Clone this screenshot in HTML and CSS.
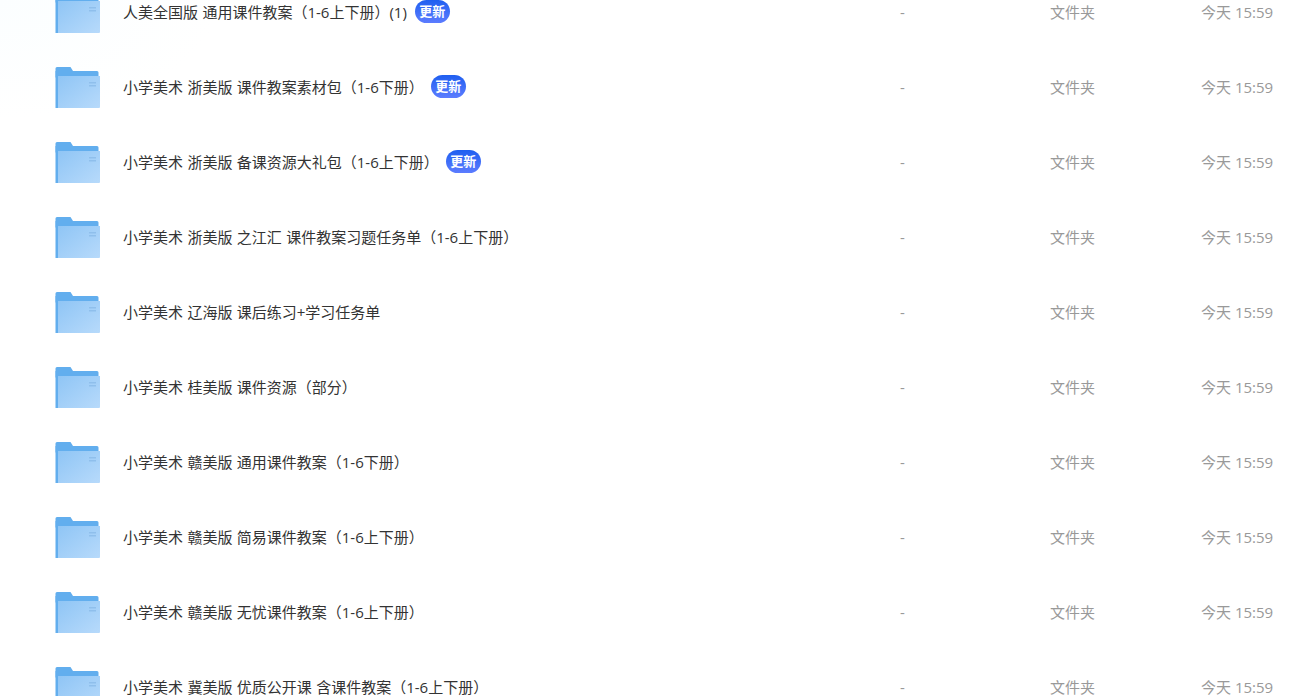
FILE: index.html
```html
<!DOCTYPE html>
<html lang="zh-CN">
  <head>
    <meta charset="UTF-8" />
    <title>文件列表</title>
    <link rel="stylesheet" href="styles.css">
  </head>
  <body>
    <svg class="defs" width="0" height="0">
      <defs>
        <linearGradient id="front" x1="0" y1="0" x2="1" y2="1">
          <stop offset="0" stop-color="#8fc5f5" />
          <stop offset="1" stop-color="#b7dafb" />
        </linearGradient>
        <symbol id="folder" viewBox="0 0 46 42">
          <path d="M.5 1.5a1.5 1.5 0 0 1 1.500-1.500h13.500l2.500 4h24a1.500 1.500 0 0 1 1.500 1.500v5h-43z" fill="#62aeee" />
          <rect x=".5" y="4" width="2.500" height="37" fill="#62aeee" />
          <path d="M3 9h42v31a1 1 0 0 1-1 1H3z" fill="url(#front)" />
          <rect x="34" y="15" width="7" height="1.500" fill="#8fbfec" />
          <rect x="34" y="18" width="7" height="1.500" fill="#8fbfec" />
        </symbol>
      </defs>
    </svg>
    <ul class="file-list">
      <li class="file-row">
        <svg class="folder"><use href="#folder" /></svg>
        <div class="name">人美全国版 通用课件教案（1-6上下册）(1)<span class="badge wide">更新</span></div>
        <div class="size">-</div>
        <div class="type">文件夹</div>
        <div class="time">今天 15:59</div>
      </li>
      <li class="file-row">
        <svg class="folder"><use href="#folder" /></svg>
        <div class="name">小学美术 浙美版 课件教案素材包（1-6下册）<span class="badge">更新</span></div>
        <div class="size">-</div>
        <div class="type">文件夹</div>
        <div class="time">今天 15:59</div>
      </li>
      <li class="file-row">
        <svg class="folder"><use href="#folder" /></svg>
        <div class="name">小学美术 浙美版 备课资源大礼包（1-6上下册）<span class="badge">更新</span></div>
        <div class="size">-</div>
        <div class="type">文件夹</div>
        <div class="time">今天 15:59</div>
      </li>
      <li class="file-row">
        <svg class="folder"><use href="#folder" /></svg>
        <div class="name">小学美术 浙美版 之江汇 课件教案习题任务单（1-6上下册）</div>
        <div class="size">-</div>
        <div class="type">文件夹</div>
        <div class="time">今天 15:59</div>
      </li>
      <li class="file-row">
        <svg class="folder"><use href="#folder" /></svg>
        <div class="name">小学美术 辽海版 课后练习+学习任务单</div>
        <div class="size">-</div>
        <div class="type">文件夹</div>
        <div class="time">今天 15:59</div>
      </li>
      <li class="file-row">
        <svg class="folder"><use href="#folder" /></svg>
        <div class="name">小学美术 桂美版 课件资源（部分）</div>
        <div class="size">-</div>
        <div class="type">文件夹</div>
        <div class="time">今天 15:59</div>
      </li>
      <li class="file-row">
        <svg class="folder"><use href="#folder" /></svg>
        <div class="name">小学美术 赣美版 通用课件教案（1-6下册）</div>
        <div class="size">-</div>
        <div class="type">文件夹</div>
        <div class="time">今天 15:59</div>
      </li>
      <li class="file-row">
        <svg class="folder"><use href="#folder" /></svg>
        <div class="name">小学美术 赣美版 简易课件教案（1-6上下册）</div>
        <div class="size">-</div>
        <div class="type">文件夹</div>
        <div class="time">今天 15:59</div>
      </li>
      <li class="file-row">
        <svg class="folder"><use href="#folder" /></svg>
        <div class="name">小学美术 赣美版 无忧课件教案（1-6上下册）</div>
        <div class="size">-</div>
        <div class="type">文件夹</div>
        <div class="time">今天 15:59</div>
      </li>
      <li class="file-row">
        <svg class="folder"><use href="#folder" /></svg>
        <div class="name">小学美术 冀美版 优质公开课 含课件教案（1-6上下册）</div>
        <div class="size">-</div>
        <div class="type">文件夹</div>
        <div class="time">今天 15:59</div>
      </li>
    </ul>
  </body>
</html>
```

FILE: styles.css
```css
* {
  box-sizing: border-box;
  margin: 0;
  padding: 0;
}

html,
body {
  height: 100%;
  overflow: hidden;
}

body {
  font-family: "Open Sans", "Noto Sans CJK SC", sans-serif;
  background: radial-gradient(ellipse at 0 0, #fbfeff, white 220px);
}

.defs {
  display: block;
}

/* list is scrolled, first row is cut off at the top */
.file-list {
  list-style: none;
  margin-top: -25px;
}

.file-row {
  display: grid;
  grid-template-columns: 46px 799px 150px 151px 1fr;
  align-items: center;
  height: 75px;
  padding-left: 55px;
  font-size: 15px;
}

.folder {
  width: 46px;
  height: 42px;
  margin-top: 1px;
}

.name,
.size,
.type,
.time {
  line-height: 20px;
  margin-bottom: 2px;
}

.name {
  display: flex;
  align-items: center;
  padding-left: 22px;
  color: #333;
  word-spacing: 0.5px;
}

.badge {
  width: 35px;
  height: 23px;
  margin-left: 7px;
  border-radius: 12px;
  background: linear-gradient(180deg, #1f5ff0, #5c7cff);
  color: white;
  font-size: 13px;
  font-weight: 700;
  line-height: 23px;
  text-align: center;
}

.badge.wide {
  margin-left: 8px;
}

.size,
.type,
.time {
  color: #999;
}
```
